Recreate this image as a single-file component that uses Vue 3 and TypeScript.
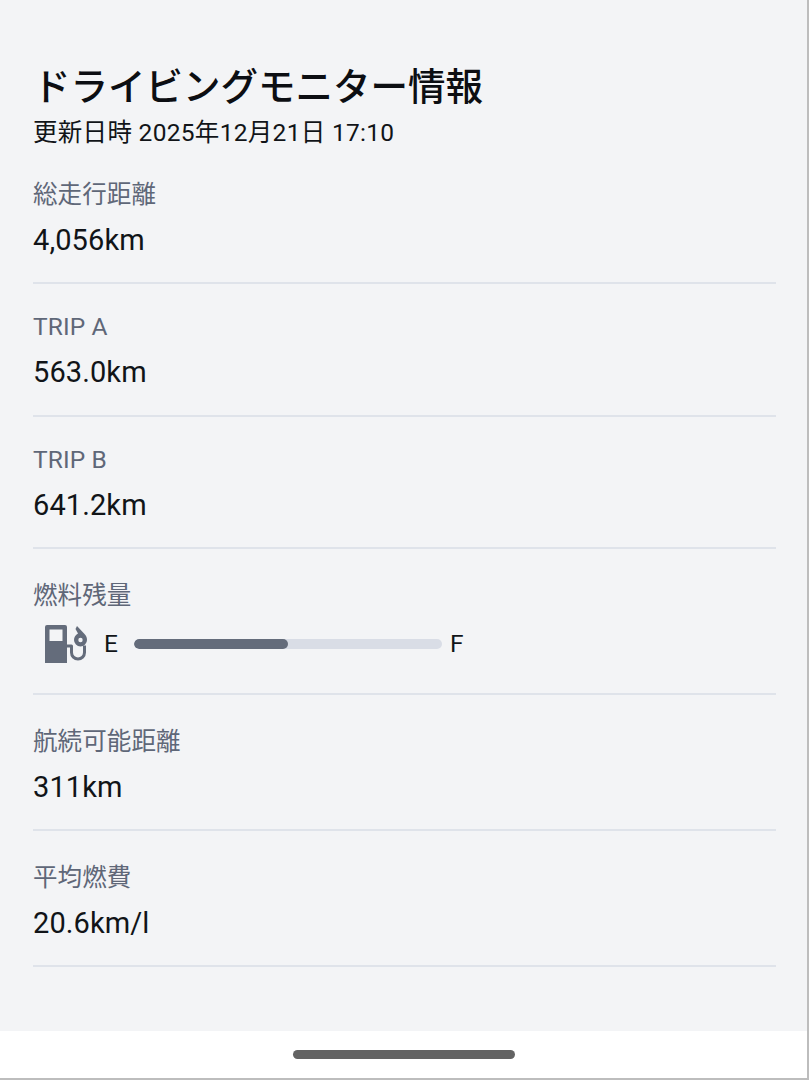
<template>
  <div class="screen">
    <main class="content">
      <h1 class="title">ドライビングモニター情報</h1>
      <p class="updated">更新日時 2025年12月21日 17:10</p>

      <section v-for="item in topItems" :key="item.label" class="row" :class="{ tall: item.tall }">
        <div class="label">{{ item.label }}</div>
        <div class="value">{{ item.value }}</div>
      </section>

      <section class="row tall fuel-row">
        <div class="label">燃料残量</div>
        <div class="fuel">
          <svg class="fuel-icon" viewBox="0 0 44 38" width="44" height="38" aria-hidden="true">
            <path
              fill-rule="evenodd"
              fill="#646c7b"
              d="M2 0h18a2 2 0 0 1 2 2v36H0V2a2 2 0 0 1 2-2zM4.500 4.500v11.500h13V4.500z"
            />
            <path
              fill="none"
              stroke="#646c7b"
              stroke-width="3"
              stroke-linejoin="round"
              d="M22 21h4.500v6.500a6.500 6.500 0 0 0 13 0v-7"
            />
            <path
              fill-rule="evenodd"
              fill="#646c7b"
              d="M32 1l7.500 8c2 2 2.500 4 2.500 6a6.500 6.500 0 0 1-13 0c0-3 1.500-5 4-6.500L30.500 4zM35.500 12.800a2.200 2.200 0 1 0 0 4.400 2.200 2.200 0 1 0 0-4.400z"
            />
          </svg>
          <span class="end e">E</span>
          <div class="track">
            <div class="fill" :style="{ width: fuelLevel + '%' }"></div>
          </div>
          <span class="end">F</span>
        </div>
      </section>

      <section v-for="item in bottomItems" :key="item.label" class="row tall">
        <div class="label">{{ item.label }}</div>
        <div class="value">{{ item.value }}</div>
      </section>
    </main>

    <footer class="nav">
      <div class="handle"></div>
    </footer>
  </div>
</template>

<script setup lang="ts">
interface Item {
  label: string;
  value: string;
  tall?: boolean;
}

const topItems: Item[] = [
  { label: '総走行距離', value: '4,056km', tall: true },
  { label: 'TRIP A', value: '563.0km' },
  { label: 'TRIP B', value: '641.2km' },
];

const bottomItems: Item[] = [
  { label: '航続可能距離', value: '311km' },
  { label: '平均燃費', value: '20.6km/l' },
];

const fuelLevel = 50;
</script>

<style>
html,
body {
  margin: 0;
  background: #ffffff;
}
</style>

<style scoped>
.screen {
  height: 1080px;
  display: flex;
  flex-direction: column;
  box-sizing: border-box;
  border-right: 2px solid #bdbdbd;
  border-bottom: 2px solid #bdbdbd;
  font-family: Roboto, 'Noto Sans CJK JP', sans-serif;
  color: #111418;
}

.content {
  height: 1031px;
  box-sizing: border-box;
  padding: 61px 31px 0 33px;
  background: #f3f4f6;
}

.title {
  margin: 0 0 5px;
  font-size: 37.500px;
  line-height: 52px;
  font-weight: 500;
  color: #0c0e12;
}

.updated {
  margin: 0;
  font-size: 24.500px;
  line-height: 30px;
  letter-spacing: 0.300px;
}

.row {
  height: 132.500px;
  box-sizing: border-box;
  padding-top: 26px;
  border-bottom: 2px solid #dfe3ea;
}

.row.tall {
  height: 136px;
  padding-top: 30px;
}

.label {
  font-size: 24.500px;
  line-height: 34px;
  letter-spacing: 0.100px;
  color: #5f6778;
}

.value {
  margin-top: 11px;
  font-size: 29px;
  line-height: 34px;
  letter-spacing: 0.100px;
}

.row.fuel-row {
  height: 146px;
}

.fuel {
  display: flex;
  align-items: center;
  margin-top: 12px;
  padding-left: 12px;
}

.fuel-icon {
  flex: none;
}

.end {
  font-size: 24.500px;
  line-height: 38px;
}

.end.e {
  margin-left: 15px;
}

.track {
  width: 308px;
  height: 10px;
  margin: 0 8px 0 16px;
  border-radius: 5px;
  background: #d9dde6;
  overflow: hidden;
}

.fill {
  height: 100%;
  border-radius: 5px;
  background: #646c7b;
}

.nav {
  flex: 1;
  display: flex;
  justify-content: center;
  padding-top: 19px;
  background: #ffffff;
}

.handle {
  width: 222px;
  height: 9px;
  border-radius: 5px;
  background: #636363;
}
</style>
